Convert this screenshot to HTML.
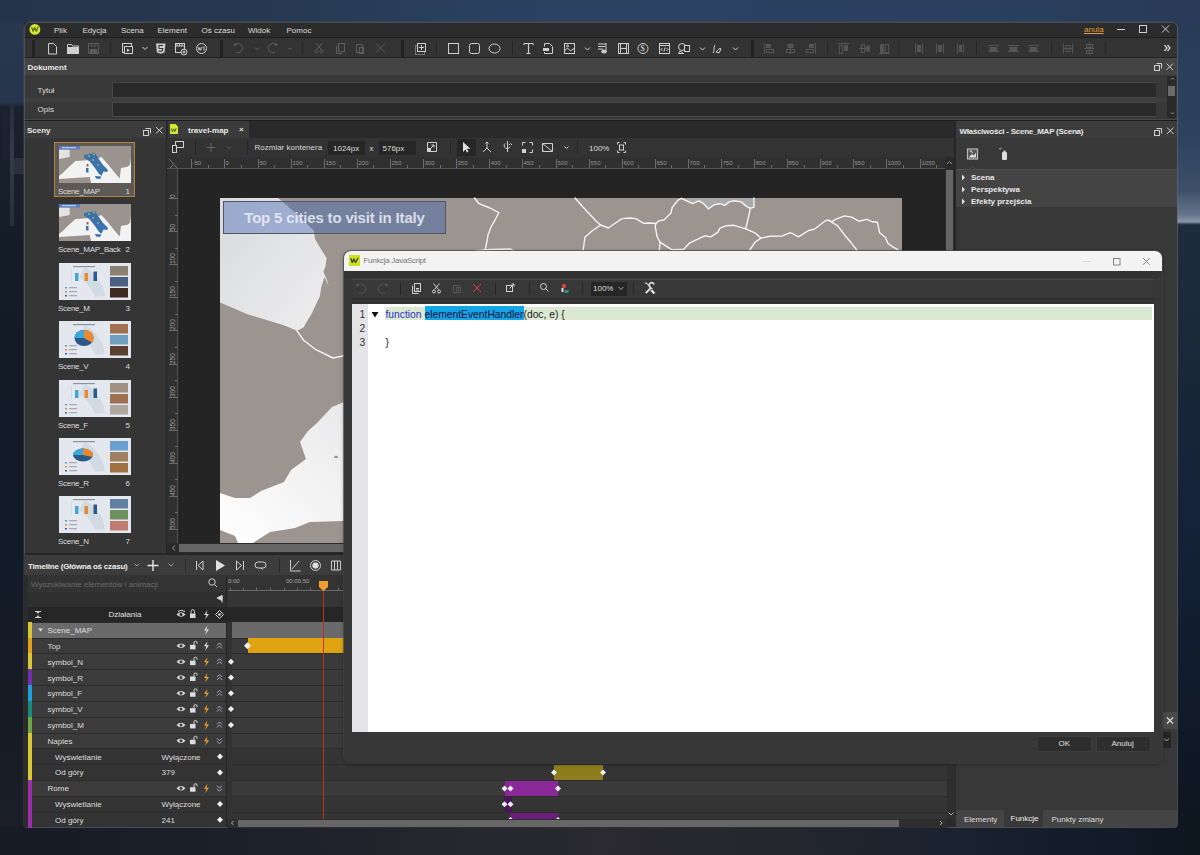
<!DOCTYPE html>
<html><head><meta charset="utf-8">
<style>
*{margin:0;padding:0;box-sizing:border-box}
html,body{width:1200px;height:855px;overflow:hidden}
body{position:relative;font-family:"Liberation Sans",sans-serif;font-size:8px;color:#dcdcdc;
background:linear-gradient(90deg,#1a2636 0%,#22354e 25%,#2b4366 50%,#2a4062 75%,#24364f 100%)}
.a{position:absolute}
.t{position:absolute;white-space:nowrap;line-height:1}
.b{font-weight:bold}
svg{position:absolute;overflow:visible}
</style></head><body>
<!-- desktop -->
<div class="a" style="left:0;top:0;width:1200px;height:22px;background:linear-gradient(90deg,#24344b 0%,#26384f 20%,#2b4263 45%,#2c4264 60%,#2a3f5e 85%,#283a56 100%)"></div>
<div class="a" style="left:0;top:22px;width:24px;height:805px;background:linear-gradient(180deg,#28384f 0%,#26354c 10%,#19212e 10.6%,#161e2a 25%,#121a26 40%,#111a26 55%,#111b28 65%,#151b26 80%,#1b1e26 100%)"></div>
<div class="a" style="left:10px;top:106px;width:3.5px;height:120px;background:linear-gradient(180deg,#262e3a,#343c48 40%,#262e3a)"></div>
<div class="a" style="left:14px;top:158px;width:10px;height:16px;background:#2a303c"></div>
<div class="a" style="left:3px;top:110px;width:6px;height:50px;background:#1c2230"></div>
<div class="a" style="left:1177px;top:22px;width:23px;height:805px;background:linear-gradient(180deg,#283c58 0%,#2f435f 15%,#3e5068 21%,#66768c 24%,#8a96a6 24.8%,#1e2c3c 25.2%,#1a2838 40%,#15223a 60%,#111c2c 80%,#0e1620 100%)"></div>
<div class="a" style="left:0;top:827px;width:1200px;height:28px;background:linear-gradient(90deg,#161b26 0%,#1c2029 20%,#24262e 35%,#2a2a30 50%,#26272d 62%,#1c2330 78%,#131c2a 90%,#0e1620 100%)"></div>
<!-- window base -->
<div class="a" style="left:24px;top:22px;width:1153px;height:805px;background:#2b2b2b;border-radius:6px 6px 3px 3px;box-shadow:0 0 0 1px rgba(80,80,80,.35)"></div>
<!-- menu bar -->
<div class="a" style="left:24px;top:22px;width:1153px;height:16px;background:#2c2c2c;border-radius:6px 6px 0 0;border-bottom:1px solid #1f1f1f"></div>
<svg style="left:0;top:0" width="50" height="40"><circle cx="34.9" cy="29.4" r="5.4" fill="#d4e634"/><path d="M31.6 27.2l1.5 4 1.6-3.6 1.6 3.6 2-4.6" fill="none" stroke="#5a6a10" stroke-width="1.2" stroke-linejoin="round"/></svg>
<div class="t" style="left:54px;top:26.70px">Plik</div>
<div class="t" style="left:82.5px;top:26.70px">Edycja</div>
<div class="t" style="left:121px;top:26.70px">Scena</div>
<div class="t" style="left:157.5px;top:26.70px">Element</div>
<div class="t" style="left:201.5px;top:26.70px">Oś czasu</div>
<div class="t" style="left:248px;top:26.70px">Widok</div>
<div class="t" style="left:286.5px;top:26.70px">Pomoc</div>
<div class="t" style="left:1084px;top:25.70px;color:#e49a3c;text-decoration:underline">anula</div>
<svg style="left:0;top:0" width="1200" height="40">
 <g stroke="#d0d0d0" stroke-width="1" fill="none">
  <path d="M1117 29.5h8"/>
  <rect x="1139.5" y="25.5" width="7" height="7"/>
  <path d="M1162 25.5l7 7M1169 25.5l-7 7"/>
 </g>
</svg>
<!-- main toolbar -->
<div class="a" style="left:24px;top:38px;width:1153px;height:20px;background:#333333;border-bottom:1px solid #232323"></div>

<svg style="left:0;top:0" width="1200" height="60">
 <!-- grips / separators -->
 <g fill="#222">
  <rect x="32" y="40" width="3" height="17"/>
  <rect x="220" y="40" width="3" height="17"/>
  <rect x="401" y="40" width="3" height="17"/>
  <rect x="751" y="40" width="3" height="17"/>
 </g>
 <g stroke="#262626" stroke-width="1">
  <path d="M110.5 41v14M302.5 41v14M436.5 41v14M512.5 41v14M827.5 41v14M898.5 41v14M976.5 41v14M1051.5 41v14M1105.5 41v14"/>
 </g>
 <g fill="none" stroke="#cfcfcf" stroke-width="1">
  <!-- new doc -->
  <path d="M48.5 43.5h5l3 3v7.5h-8z"/>
  <!-- folder -->
  <path d="M67.5 44.5h4l1 1.5h6v7.5h-11z"/>
  <rect x="67.5" y="47.5" width="11" height="6" fill="#cfcfcf"/>
  <!-- scene -->
  <rect x="122.5" y="43.5" width="9" height="9"/>
  <rect x="124.5" y="46.5" width="8" height="7" fill="#333"/>
  <path d="M127 48.5l3 1.7-3 1.7z" fill="#cfcfcf" stroke="none"/>
  <path d="M142.5 47l2.5 2.5 2.5-2.5"/>
  <!-- html5 -->
  <path d="M156 43.5h9.5l-1 9-3.8 1.2-3.8-1.2z" fill="#cfcfcf" stroke="none"/>
  <path d="M158.5 45.5h4.5M158.8 45.5l.4 3h3.5l-.3 2.3-2 .6-2-.6" stroke="#333" stroke-width="1.1"/>
  <!-- film add -->
  <rect x="175.5" y="43.5" width="9" height="9"/>
  <path d="M175.5 46h9M177 43.5v2.5M179.5 43.5v2.5M182 43.5v2.5"/>
  <circle cx="184" cy="52" r="3" fill="#333"/>
  <path d="M182.3 52h3.4M184 50.3v3.4"/>
  <!-- WS circle -->
  <circle cx="201.5" cy="48.5" r="5"/>
  <path d="M198 46.8l.9 3.6.9-2.8.9 2.8.9-3.6M204.8 47.2c-.4-.5-1.8-.6-1.8.3 0 .9 1.9.7 1.9 1.7 0 .9-1.5 1-2 .3" stroke-width=".8"/>
 </g>
 <g fill="none" stroke="#5c5c5c" stroke-width="1">
  <!-- save disabled -->
  <path d="M88.5 43.5h10v10h-10z"/>
  <rect x="90.5" y="49.5" width="6" height="4" fill="#5c5c5c"/>
  <path d="M91 43.5v2.5h5v-2.5"/>
  <!-- undo/redo -->
  <path d="M235.5 44.5a4.5 4.5 0 1 1 0.5 7.5"/><circle cx="235" cy="44.5" r="1" fill="#5c5c5c"/>
  <path d="M255 47.5l2 2 2-2"/>
  <path d="M275.5 44.5a4.5 4.5 0 1 0-0.5 7.5"/><circle cx="276" cy="44.5" r="1" fill="#5c5c5c"/>
  <path d="M288 47.5l2 2 2-2"/>
  <!-- cut -->
  <path d="M316 43l5.5 7M322 43l-5.5 7"/>
  <circle cx="316.5" cy="51.5" r="1.5"/><circle cx="321.5" cy="51.5" r="1.5"/>
  <!-- copy -->
  <path d="M336.5 45.5v8h6"/><rect x="338.5" y="43.5" width="6" height="8"/>
  <!-- paste -->
  <rect x="356.5" y="44.5" width="6" height="8"/><rect x="359.5" y="47.5" width="4" height="6"/>
  <!-- x -->
  <path d="M376 43.5l9 9M385 43.5l-9 9"/>
 </g>
 <g fill="none" stroke="#cfcfcf" stroke-width="1">
  <!-- add element -->
  <rect x="415.5" y="45.5" width="9" height="9" stroke="#777"/>
  <rect x="417.5" y="43.5" width="8" height="8" fill="#333"/>
  <path d="M421.5 45v5M419 47.5h5"/>
  <!-- rect, rounded, ellipse -->
  <rect x="448.5" y="43.5" width="10" height="10"/>
  <rect x="469.5" y="43.5" width="10" height="10" rx="2"/>
  <ellipse cx="494.5" cy="48.5" rx="5.5" ry="4.5"/>
  <!-- T -->
  <path d="M524 43.5h9M528.5 43.5v10M526.5 53.5h4M524 43.5v1.5M533 43.5v1.5" stroke-width="1.2"/>
  <!-- html doc -->
  <path d="M544.5 52v1.5h8v-7l-3-3h-5v3"/>
  <rect x="543" y="48" width="6" height="3" fill="#cfcfcf" stroke="none"/>
  <!-- image -->
  <rect x="564.5" y="43.5" width="10" height="10"/>
  <path d="M564.5 51l3-3 3 3 4-3"/>
  <circle cx="567.5" cy="46" r="1"/>
  <path d="M585 47.5l2.5 2.5 2.5-2.5"/>
  <!-- audio -->
  <path d="M598 44h8M598 46.5h7M598 49h5M606 43v8"/>
  <ellipse cx="604" cy="51.5" rx="2.5" ry="1.5" fill="#cfcfcf"/>
  <!-- film -->
  <rect x="618.5" y="43.5" width="10" height="10"/>
  <path d="M620.5 43.5v10M626.5 43.5v10M620.5 48.5h6"/>
  <!-- S -->
  <circle cx="643" cy="48.5" r="5"/>
  <text x="640.5" y="51.3" font-size="7.5" font-family="Liberation Serif" font-weight="bold" fill="#cfcfcf" stroke="none">S</text>
  <!-- code -->
  <rect x="659.5" y="43.5" width="10" height="10"/>
  <path d="M659.5 45.5h10"/>
  <path d="M662.5 48l-1.5 1.5 1.5 1.5M666.5 48l1.5 1.5-1.5 1.5M665 47.5l-1 4"/>
  <!-- shapes -->
  <circle cx="682" cy="47" r="3.5"/>
  <rect x="684.5" y="45.5" width="5" height="6" fill="#333"/>
  <path d="M680 51l-1.5 2.5h5z"/>
  <path d="M700 47.5l2.5 2.5 2.5-2.5"/>
  <!-- pen -->
  <path d="M713 53c2-1 0-5 2-8M716 52l4-4 1 1-2 4z"/>
  <path d="M733 47.5l2.5 2.5 2.5-2.5"/>
  <!-- chevrons » -->
  <path d="M1164.5 45l2.5 3-2.5 3M1167.5 45l2.5 3-2.5 3" stroke-width="1.3"/>
 </g>
 <g fill="none" stroke="#555" stroke-width="1">
  <!-- align horiz -->
  <path d="M764.5 43v11"/><rect x="766.5" y="44.5" width="4" height="3" fill="#555"/><rect x="766.5" y="49.5" width="7" height="3"/>
  <path d="M790.5 43v11"/><rect x="788" y="44.5" width="5" height="3" fill="#555"/><rect x="786.5" y="49.5" width="8" height="3"/>
  <path d="M815.5 43v11"/><rect x="809.5" y="44.5" width="4" height="3" fill="#555"/><rect x="806.5" y="49.5" width="7" height="3"/>
  <!-- align vert -->
  <path d="M838 43.5h11"/><rect x="839.5" y="45.5" width="3" height="8"/><rect x="844.5" y="45.5" width="3" height="5" fill="#555"/>
  <path d="M859 48.5h11"/><rect x="861.5" y="44.5" width="3" height="8"/><rect x="866.5" y="46" width="3" height="5" fill="#555"/>
  <path d="M879 53.5h11"/><rect x="880.5" y="44.5" width="3" height="8" fill="#555"/><rect x="885.5" y="44.5" width="3" height="8"/>
  <!-- distribute -->
  <path d="M915.5 43.5v10M922.5 43.5v10"/><rect x="917.5" y="45.5" width="3" height="6" fill="#555"/>
  <path d="M936.5 43.5v10M943.5 43.5v10"/><rect x="938.5" y="45.5" width="3" height="6" fill="#555"/>
  <path d="M957.5 43.5v10M963.5 43.5v10"/><rect x="959.5" y="45.5" width="2" height="6" fill="#555"/>
  <path d="M988 45.5h11M988 51.5h11"/><rect x="990" y="47.5" width="7" height="3" fill="#555"/>
  <path d="M1008 45.5h11M1008 51.5h11"/><rect x="1010" y="47.5" width="7" height="3" fill="#555"/>
  <path d="M1028 45.5h11M1028 51.5h11"/><rect x="1030" y="47.5" width="7" height="3" fill="#555"/>
  <path d="M1063.5 43.5v10M1072.5 43.5v10M1063.5 48.5h9"/><rect x="1066" y="45.5" width="4" height="6"/>
  <path d="M1089.5 42.5v12M1084 48.5h11"/><rect x="1086.5" y="44.5" width="6" height="3"/><rect x="1086.5" y="50.5" width="6" height="3"/>
 </g>
</svg>

<!-- Dokument panel -->
<div class="a" style="left:24px;top:58px;width:1153px;height:17px;background:#444444"></div>
<div class="t b" style="left:27.5px;top:64.20px;color:#e8e8e8">Dokument</div>
<div class="a" style="left:24px;top:75px;width:1153px;height:45px;background:#383838"></div>
<div class="t" style="left:37.5px;top:86.70px">Tytuł</div>
<div class="t" style="left:37.5px;top:105.70px">Opis</div>
<div class="a" style="left:112px;top:82px;width:1044px;height:15.5px;background:#2a2a2a;border:1px solid #474747;border-right:none"></div>
<div class="a" style="left:112px;top:102px;width:1044px;height:14.5px;background:#2a2a2a;border:1px solid #474747;border-right:none"></div>
<div class="a" style="left:24px;top:97.5px;width:1143px;height:4.5px;background:#3e3e3e"></div>
<div class="a" style="left:24px;top:118.5px;width:1153px;height:1px;background:#474747"></div>
<div class="a" style="left:1167px;top:76px;width:9px;height:42px;background:#2a2a2a"></div>
<div class="a" style="left:1168px;top:86px;width:7px;height:10px;background:#6a6a6a"></div>
<svg style="left:0;top:0" width="1200" height="120">
 <g fill="none" stroke="#cfcfcf" stroke-width="1">
  <path d="M1171 79.5l1.5-1.5 1.5 1.5M1171 112.5l1.5 1.5 1.5-1.5" stroke="#999"/>
  <rect x="1154.5" y="65.5" width="5" height="5"/><path d="M1156.5 63.5h5v5"/>
  <path d="M1166.5 63.5l6.5 6.5M1173 63.5l-6.5 6.5"/>
 </g>
</svg>

<!-- Sceny panel -->
<div class="a" style="left:24px;top:120px;width:1153px;height:1px;background:#1e1e1e"></div>
<div class="a" style="left:24px;top:121px;width:142px;height:16.5px;background:#3c3c3c"></div>
<div class="t b" style="left:27px;top:127.20px;color:#e8e8e8">Sceny</div>
<svg style="left:0;top:0" width="200" height="140">
 <g fill="none" stroke="#cfcfcf" stroke-width="1">
  <rect x="143.5" y="130.5" width="5" height="5"/><path d="M145.5 128.5h5v5"/>
  <path d="M156 127l6.5 6.5M162.5 127l-6.5 6.5"/>
 </g>
</svg>
<div class="a" style="left:24px;top:137.5px;width:142px;height:417px;background:#353535"></div>
<div class="a" style="left:166px;top:121px;width:1px;height:434px;background:#262626"></div>
<!-- scene 1 selected -->
<div class="a" style="left:54px;top:142px;width:81px;height:55px;background:#5d5955;border:1px solid #b3843f"></div>

<svg style="left:59px;top:145.5px" width="72" height="37" viewBox="0 0 72 37">
 <rect width="72" height="37" fill="#9a938e"/>
 <path d="M0 29.8 L3.5 27.2 L8.7 22 L16.5 14.9 L25 14.5 L30 14 L39.3 12.3 L42.5 11 L51 20.7 L55.5 26.5 L60.7 32.4 L62 22 L68.5 20.7 L71 18.8 L72 12 V37 H32 L30.8 31 L0 33 Z" fill="#f2f2f2"/>
 <path d="M0 3.5 L10.7 3.5 L10.7 11 L0 13 Z" fill="#e4e4e4"/>
 <path d="M25 9 L36 7 L39.3 12.3 L43.8 18.8 L49 24 L48 26 L44.5 25.5 L42.5 29.8 L40 28 L36 22 L30.8 15.5 L25 11.5 Z" fill="#3a72ac"/>
 <path d="M36 30 L42.5 30.5 L41 33 L37 32.5 Z" fill="#3a72ac"/>
 <path d="M27 22 H29.5 V26.5 H27 Z" fill="#3a72ac"/>
 <path d="M27.6 18 H29.5 V20.5 H27.6 Z" fill="#a05a50"/>
 <circle cx="30" cy="10" r=".8" fill="#e8d040"/><circle cx="35" cy="8.5" r=".8" fill="#e8d040"/><circle cx="34" cy="14" r=".8" fill="#e8d040"/><circle cx="39" cy="19" r=".8" fill="#e8d040"/>
 <rect x="0" y="0" width="21" height="3.5" fill="#5a7cc0"/><rect x="3" y="1.2" width="14" height="1" fill="#c8d4f0"/>
</svg>
<div class="t" style="left:58px;top:187.5px;letter-spacing:-.3px">Scene_MAP</div>
<div class="t" style="left:125.5px;top:187.5px">1</div>
<svg style="left:59px;top:204px" width="72" height="37" viewBox="0 0 72 37">
 <rect width="72" height="37" fill="#9a938e"/>
 <path d="M0 29.8 L3.5 27.2 L8.7 22 L16.5 14.9 L25 14.5 L30 14 L39.3 12.3 L42.5 11 L51 20.7 L55.5 26.5 L60.7 32.4 L62 22 L68.5 20.7 L71 18.8 L72 12 V37 H32 L30.8 31 L0 33 Z" fill="#f2f2f2"/>
 <path d="M0 3.5 L10.7 3.5 L10.7 11 L0 13 Z" fill="#e4e4e4"/>
 <path d="M25 9 L36 7 L39.3 12.3 L43.8 18.8 L49 24 L48 26 L44.5 25.5 L42.5 29.8 L40 28 L36 22 L30.8 15.5 L25 11.5 Z" fill="#3a72ac"/>
 <path d="M36 30 L42.5 30.5 L41 33 L37 32.5 Z" fill="#3a72ac"/>
 <path d="M27 22 H29.5 V26.5 H27 Z" fill="#3a72ac"/>
 <path d="M27.6 18 H29.5 V20.5 H27.6 Z" fill="#a05a50"/>
 <circle cx="30" cy="10" r=".8" fill="#e8d040"/><circle cx="35" cy="8.5" r=".8" fill="#e8d040"/><circle cx="34" cy="14" r=".8" fill="#e8d040"/><circle cx="39" cy="19" r=".8" fill="#e8d040"/>
 <rect x="0" y="0" width="21" height="3.5" fill="#5a7cc0"/><rect x="3" y="1.2" width="14" height="1" fill="#c8d4f0"/>
</svg>
<div class="t" style="left:58px;top:246px;letter-spacing:-.3px">Scene_MAP_Back</div>
<div class="t" style="left:125.5px;top:246px">2</div>
<svg style="left:59px;top:262.5px" width="72" height="37" viewBox="0 0 72 37">
 <rect width="72" height="37" fill="#e4e8ee"/>
 <path d="M26 4 C34 8 40 16 44 24 L46 33 L36 34 C33 26 28 20 20 14 Z" fill="#d2dae4"/>
 <rect x="14" y="3" width="22" height="1.2" fill="#8a94a0"/>
 <rect x="16" y="10" width="3.5" height="8" fill="#40a8d8"/><rect x="25.5" y="10" width="3.5" height="8" fill="#e88a30"/><rect x="34.5" y="8.5" width="3.5" height="9.5" fill="#2a5a8a"/><rect x="12" y="6" width=".5" height="13" fill="#c8ccd4"/>
 <rect x="6" y="24" width="2" height="1.5" fill="#40a8d8"/><rect x="10" y="24.2" width="8" height="1" fill="#99a"/>
 <rect x="6" y="28" width="2" height="1.5" fill="#e88a30"/><rect x="10" y="28.2" width="8" height="1" fill="#99a"/>
 <rect x="6" y="32" width="2" height="1.5" fill="#2a6aa0"/><rect x="10" y="32.2" width="8" height="1" fill="#99a"/>
 <rect x="51" y="3" width="18" height="9.5" fill="#8a8070"/>
 <rect x="51" y="14" width="18" height="9.5" fill="#4a6080"/>
 <rect x="51" y="25" width="18" height="9.5" fill="#3a2a20"/>
</svg>
<div class="t" style="left:58px;top:304.5px;letter-spacing:-.3px">Scene_M</div>
<div class="t" style="left:125.5px;top:304.5px">3</div>
<svg style="left:59px;top:321px" width="72" height="37" viewBox="0 0 72 37">
 <rect width="72" height="37" fill="#e4e8ee"/>
 <path d="M26 4 C34 8 40 16 44 24 L46 33 L36 34 C33 26 28 20 20 14 Z" fill="#d2dae4"/>
 <rect x="14" y="3" width="22" height="1.2" fill="#8a94a0"/>
 <ellipse cx="25" cy="17" rx="9.5" ry="8" fill="#2a5a8a"/><path d="M25 17 L25 9 A9.5 8 0 0 1 33 21.5 Z" fill="#e88a30"/><path d="M25 17 L15.5 17 A9.5 8 0 0 1 25 9 Z" fill="#3aa8d8"/>
 <rect x="6" y="24" width="2" height="1.5" fill="#40a8d8"/><rect x="10" y="24.2" width="8" height="1" fill="#99a"/>
 <rect x="6" y="28" width="2" height="1.5" fill="#e88a30"/><rect x="10" y="28.2" width="8" height="1" fill="#99a"/>
 <rect x="6" y="32" width="2" height="1.5" fill="#2a6aa0"/><rect x="10" y="32.2" width="8" height="1" fill="#99a"/>
 <rect x="51" y="3" width="18" height="9.5" fill="#a07050"/>
 <rect x="51" y="14" width="18" height="9.5" fill="#70a0c0"/>
 <rect x="51" y="25" width="18" height="9.5" fill="#5a4030"/>
</svg>
<div class="t" style="left:58px;top:363px;letter-spacing:-.3px">Scene_V</div>
<div class="t" style="left:125.5px;top:363px">4</div>
<svg style="left:59px;top:379.5px" width="72" height="37" viewBox="0 0 72 37">
 <rect width="72" height="37" fill="#e4e8ee"/>
 <path d="M26 4 C34 8 40 16 44 24 L46 33 L36 34 C33 26 28 20 20 14 Z" fill="#d2dae4"/>
 <rect x="14" y="3" width="22" height="1.2" fill="#8a94a0"/>
 <rect x="16" y="10" width="3.5" height="8" fill="#40a8d8"/><rect x="25.5" y="10" width="3.5" height="8" fill="#e88a30"/><rect x="34.5" y="8.5" width="3.5" height="9.5" fill="#2a5a8a"/><rect x="12" y="6" width=".5" height="13" fill="#c8ccd4"/>
 <rect x="6" y="24" width="2" height="1.5" fill="#40a8d8"/><rect x="10" y="24.2" width="8" height="1" fill="#99a"/>
 <rect x="6" y="28" width="2" height="1.5" fill="#e88a30"/><rect x="10" y="28.2" width="8" height="1" fill="#99a"/>
 <rect x="6" y="32" width="2" height="1.5" fill="#2a6aa0"/><rect x="10" y="32.2" width="8" height="1" fill="#99a"/>
 <rect x="51" y="3" width="18" height="9.5" fill="#a09080"/>
 <rect x="51" y="14" width="18" height="9.5" fill="#a07050"/>
 <rect x="51" y="25" width="18" height="9.5" fill="#b0a8a0"/>
</svg>
<div class="t" style="left:58px;top:421.5px;letter-spacing:-.3px">Scene_F</div>
<div class="t" style="left:125.5px;top:421.5px">5</div>
<svg style="left:59px;top:438px" width="72" height="37" viewBox="0 0 72 37">
 <rect width="72" height="37" fill="#e4e8ee"/>
 <path d="M26 4 C34 8 40 16 44 24 L46 33 L36 34 C33 26 28 20 20 14 Z" fill="#d2dae4"/>
 <rect x="14" y="3" width="22" height="1.2" fill="#8a94a0"/>
 <ellipse cx="24" cy="17" rx="10" ry="6.5" fill="#2a5a8a"/><path d="M24 17 L24 10.5 A10 6.5 0 0 1 33.5 19 Z" fill="#e88a30"/><path d="M24 17 L14 17 A10 6.5 0 0 1 24 10.5 Z" fill="#3aa8d8"/>
 <rect x="6" y="24" width="2" height="1.5" fill="#40a8d8"/><rect x="10" y="24.2" width="8" height="1" fill="#99a"/>
 <rect x="6" y="28" width="2" height="1.5" fill="#e88a30"/><rect x="10" y="28.2" width="8" height="1" fill="#99a"/>
 <rect x="6" y="32" width="2" height="1.5" fill="#2a6aa0"/><rect x="10" y="32.2" width="8" height="1" fill="#99a"/>
 <rect x="51" y="3" width="18" height="9.5" fill="#6aa0d0"/>
 <rect x="51" y="14" width="18" height="9.5" fill="#a08060"/>
 <rect x="51" y="25" width="18" height="9.5" fill="#a07040"/>
</svg>
<div class="t" style="left:58px;top:480px;letter-spacing:-.3px">Scene_R</div>
<div class="t" style="left:125.5px;top:480px">6</div>
<svg style="left:59px;top:496px" width="72" height="37" viewBox="0 0 72 37">
 <rect width="72" height="37" fill="#e4e8ee"/>
 <path d="M26 4 C34 8 40 16 44 24 L46 33 L36 34 C33 26 28 20 20 14 Z" fill="#d2dae4"/>
 <rect x="14" y="3" width="22" height="1.2" fill="#8a94a0"/>
 <rect x="16" y="10" width="3.5" height="8" fill="#40a8d8"/><rect x="25.5" y="10" width="3.5" height="8" fill="#e88a30"/><rect x="34.5" y="8.5" width="3.5" height="9.5" fill="#2a5a8a"/><rect x="12" y="6" width=".5" height="13" fill="#c8ccd4"/>
 <rect x="6" y="24" width="2" height="1.5" fill="#40a8d8"/><rect x="10" y="24.2" width="8" height="1" fill="#99a"/>
 <rect x="6" y="28" width="2" height="1.5" fill="#e88a30"/><rect x="10" y="28.2" width="8" height="1" fill="#99a"/>
 <rect x="6" y="32" width="2" height="1.5" fill="#2a6aa0"/><rect x="10" y="32.2" width="8" height="1" fill="#99a"/>
 <rect x="51" y="3" width="18" height="9.5" fill="#6080a0"/>
 <rect x="51" y="14" width="18" height="9.5" fill="#709060"/>
 <rect x="51" y="25" width="18" height="9.5" fill="#c07a70"/>
</svg>
<div class="t" style="left:58px;top:538px;letter-spacing:-.3px">Scene_N</div>
<div class="t" style="left:125.5px;top:538px">7</div>
<!-- editor tabs -->
<div class="a" style="left:167px;top:121px;width:788px;height:16.5px;background:#2a2a2a"></div>
<div class="a" style="left:167.5px;top:121px;width:81.5px;height:16.5px;background:#3b3b3b"></div>
<svg style="left:0;top:0" width="200" height="140"><path d="M170 124h5.5l2.5 2.5v7.5h-8z" fill="#d4e634"/><path d="M171.3 128.5l1.1 3 1.2-2.6 1.2 2.6 1.4-3.4" fill="none" stroke="#4a5a10" stroke-width="1"/></svg>
<div class="t b" style="left:188px;top:126.70px;color:#e8e8e8">travel-map</div>
<div class="t b" style="left:239px;top:126.20px;color:#ddd;font-size:8px">×</div>
<!-- tool row -->
<div class="a" style="left:167px;top:137.5px;width:788px;height:19.5px;background:#333333"></div>
<div class="t" style="left:254.5px;top:144.20px;color:#d8d8d8">Rozmiar kontenera</div>
<div class="a" style="left:328px;top:141px;width:37px;height:14px;background:#262626"></div>
<div class="t" style="left:333px;top:144.70px;color:#ddd">1024px</div>
<div class="t" style="left:369.5px;top:144.70px;color:#ddd">x</div>
<div class="a" style="left:378.5px;top:141px;width:37px;height:14px;background:#262626"></div>
<div class="t" style="left:382.5px;top:144.70px;color:#ddd">576px</div>
<div class="a" style="left:457px;top:139px;width:19px;height:17px;background:#262626"></div>
<div class="t" style="left:589px;top:144.70px;color:#ddd">100%</div>

<svg style="left:0;top:0" width="1000" height="170">
 <g stroke="#262626"><path d="M195.5 140v15M247.5 140v15M450.5 140v15M577.5 140v15"/></g>
 <g fill="none" stroke="#cfcfcf" stroke-width="1">
  <rect x="175.5" y="141.5" width="8" height="6"/><rect x="172.5" y="145.5" width="4" height="7" fill="#333"/>
  <path d="M427.5 142.5h9v9h-9z"/><path d="M430 149l4-4M431.5 145h2.5v2.5"/><rect x="427.5" y="148.5" width="3" height="3" fill="#cfcfcf"/>
  <path d="M463 142v10l2.5-2.5 1.5 3 1.5-.8-1.5-3h3.5z" fill="#e0e0e0" stroke="none"/>
  <path d="M487 142v6M487 148l-4 4M487 148l4 4M485.5 143.5l1.5-1.5 1.5 1.5" />
  <path d="M505 143.5a3 3 0 1 0 5 3M507.5 141v11M509 145l1.5-1.5 1.5 1.5"/>
  <path d="M522.5 145.5v-3h3M529.5 142.5h3v3M532.5 149.5v3h-3M522.5 149.5"/><rect x="522.5" y="149.5" width="3" height="3" fill="#cfcfcf"/>
  <path d="M542.5 143.5h10v8h-10z M542.5 143.5l10 8M545 152l-1.5-1.5"/>
  <path d="M564.5 146.5l2 2 2-2"/>
  <path d="M617.5 144.5v-2h2M623.5 142.5h2v2M625.5 150.5v2h-2M619.5 152.5h-2v-2"/><rect x="619.5" y="145" width="4" height="5"/>
 </g>
 <g fill="none" stroke="#666" stroke-width="1">
  <path d="M211 143v9M206.5 147.5h9"/>
  <path d="M227 146.5l2 2 2-2"/>
 </g>
</svg>
<div class="a" style="left:167px;top:157px;width:778px;height:12px;background:#303030;border-bottom:1px solid #555"></div>
<div class="a" style="left:945px;top:157px;width:10px;height:12px;background:#2a2a2a"></div>
<div class="a" style="left:167px;top:169px;width:11px;height:374px;background:#303030;border-right:1px solid #555"></div>
<div class="a" style="left:178px;top:169px;width:767px;height:374px;background:#242424"></div>
<div class="a" style="left:945px;top:169px;width:9px;height:374px;background:#2a2a2a"></div>
<div class="a" style="left:946px;top:170px;width:7px;height:372px;background:#666666"></div>
<div class="a" style="left:167px;top:543px;width:788px;height:10px;background:#2a2a2a"></div>
<div class="a" style="left:179px;top:544px;width:776px;height:8px;background:#666666"></div>
<div class="a" style="left:954px;top:121px;width:1.5px;height:434px;background:#262626"></div>
<div class="a" style="left:167px;top:553px;width:788px;height:2px;background:#262626"></div>
<div class="a" style="left:24px;top:553px;width:142px;height:2px;background:#262626"></div>

<svg style="left:0;top:0" width="960" height="560"><g stroke="#6a6a6a" stroke-width="1">
<path d="M191.5 159v9"/>
<path d="M208.5 165v3"/>
<path d="M224.5 159v9"/>
<path d="M241.5 165v3"/>
<path d="M258.5 159v9"/>
<path d="M274.5 165v3"/>
<path d="M291.5 159v9"/>
<path d="M307.5 165v3"/>
<path d="M324.5 159v9"/>
<path d="M340.5 165v3"/>
<path d="M357.5 159v9"/>
<path d="M373.5 165v3"/>
<path d="M390.5 159v9"/>
<path d="M407.5 165v3"/>
<path d="M423.5 159v9"/>
<path d="M440.5 165v3"/>
<path d="M456.5 159v9"/>
<path d="M473.5 165v3"/>
<path d="M489.5 159v9"/>
<path d="M506.5 165v3"/>
<path d="M522.5 159v9"/>
<path d="M539.5 165v3"/>
<path d="M556.5 159v9"/>
<path d="M572.5 165v3"/>
<path d="M589.5 159v9"/>
<path d="M605.5 165v3"/>
<path d="M622.5 159v9"/>
<path d="M638.5 165v3"/>
<path d="M655.5 159v9"/>
<path d="M671.5 165v3"/>
<path d="M688.5 159v9"/>
<path d="M704.5 165v3"/>
<path d="M721.5 159v9"/>
<path d="M738.5 165v3"/>
<path d="M754.5 159v9"/>
<path d="M771.5 165v3"/>
<path d="M787.5 159v9"/>
<path d="M804.5 165v3"/>
<path d="M820.5 159v9"/>
<path d="M837.5 165v3"/>
<path d="M853.5 159v9"/>
<path d="M870.5 165v3"/>
<path d="M886.5 159v9"/>
<path d="M903.5 165v3"/>
<path d="M920.5 159v9"/>
<path d="M936.5 165v3"/>
<path d="M169 198.5h9"/>
<path d="M175 215.5h3"/>
<path d="M169 231.5h9"/>
<path d="M175 248.5h3"/>
<path d="M169 264.5h9"/>
<path d="M175 281.5h3"/>
<path d="M169 297.5h9"/>
<path d="M175 314.5h3"/>
<path d="M169 330.5h9"/>
<path d="M175 347.5h3"/>
<path d="M169 364.5h9"/>
<path d="M175 380.5h3"/>
<path d="M169 397.5h9"/>
<path d="M175 413.5h3"/>
<path d="M169 430.5h9"/>
<path d="M175 446.5h3"/>
<path d="M169 463.5h9"/>
<path d="M175 479.5h3"/>
<path d="M169 496.5h9"/>
<path d="M175 512.5h3"/>
<path d="M169 529.5h9"/>
<path d="M169 159l8 9M170 168l3-3" stroke="#777"/>
</g><g fill="none" stroke="#999"><path d="M947 164l2.5-2.5 2.5 2.5M175 545.5l-2.5 2.5 2.5 2.5"/></g></svg>
<div class="t" style="left:192.5px;top:160px;font-size:6px;color:#949494">-50</div>
<div class="t" style="left:225.5px;top:160px;font-size:6px;color:#949494">0</div>
<div class="t" style="left:259.5px;top:160px;font-size:6px;color:#949494">50</div>
<div class="t" style="left:292.5px;top:160px;font-size:6px;color:#949494">100</div>
<div class="t" style="left:325.5px;top:160px;font-size:6px;color:#949494">150</div>
<div class="t" style="left:358.5px;top:160px;font-size:6px;color:#949494">200</div>
<div class="t" style="left:391.5px;top:160px;font-size:6px;color:#949494">250</div>
<div class="t" style="left:424.5px;top:160px;font-size:6px;color:#949494">300</div>
<div class="t" style="left:457.5px;top:160px;font-size:6px;color:#949494">350</div>
<div class="t" style="left:490.5px;top:160px;font-size:6px;color:#949494">400</div>
<div class="t" style="left:523.5px;top:160px;font-size:6px;color:#949494">450</div>
<div class="t" style="left:557.5px;top:160px;font-size:6px;color:#949494">500</div>
<div class="t" style="left:590.5px;top:160px;font-size:6px;color:#949494">550</div>
<div class="t" style="left:623.5px;top:160px;font-size:6px;color:#949494">600</div>
<div class="t" style="left:656.5px;top:160px;font-size:6px;color:#949494">650</div>
<div class="t" style="left:689.5px;top:160px;font-size:6px;color:#949494">700</div>
<div class="t" style="left:722.5px;top:160px;font-size:6px;color:#949494">750</div>
<div class="t" style="left:755.5px;top:160px;font-size:6px;color:#949494">800</div>
<div class="t" style="left:788.5px;top:160px;font-size:6px;color:#949494">850</div>
<div class="t" style="left:821.5px;top:160px;font-size:6px;color:#949494">900</div>
<div class="t" style="left:854.5px;top:160px;font-size:6px;color:#949494">950</div>
<div class="t" style="left:887.5px;top:160px;font-size:6px;color:#949494">1000</div>
<div class="t" style="left:921.5px;top:160px;font-size:6px;color:#949494">1050</div>
<div class="t" style="left:170px;top:197.5px;font-size:6.5px;color:#a0a0a0;transform:rotate(-90deg);transform-origin:0 0">0</div>
<div class="t" style="left:170px;top:230.5px;font-size:6.5px;color:#a0a0a0;transform:rotate(-90deg);transform-origin:0 0">50</div>
<div class="t" style="left:170px;top:263.5px;font-size:6.5px;color:#a0a0a0;transform:rotate(-90deg);transform-origin:0 0">100</div>
<div class="t" style="left:170px;top:296.5px;font-size:6.5px;color:#a0a0a0;transform:rotate(-90deg);transform-origin:0 0">150</div>
<div class="t" style="left:170px;top:329.5px;font-size:6.5px;color:#a0a0a0;transform:rotate(-90deg);transform-origin:0 0">200</div>
<div class="t" style="left:170px;top:363.5px;font-size:6.5px;color:#a0a0a0;transform:rotate(-90deg);transform-origin:0 0">250</div>
<div class="t" style="left:170px;top:396.5px;font-size:6.5px;color:#a0a0a0;transform:rotate(-90deg);transform-origin:0 0">300</div>
<div class="t" style="left:170px;top:429.5px;font-size:6.5px;color:#a0a0a0;transform:rotate(-90deg);transform-origin:0 0">350</div>
<div class="t" style="left:170px;top:462.5px;font-size:6.5px;color:#a0a0a0;transform:rotate(-90deg);transform-origin:0 0">400</div>
<div class="t" style="left:170px;top:495.5px;font-size:6.5px;color:#a0a0a0;transform:rotate(-90deg);transform-origin:0 0">450</div>
<div class="t" style="left:170px;top:528.5px;font-size:6.5px;color:#a0a0a0;transform:rotate(-90deg);transform-origin:0 0">500</div>
<!-- stage / map -->
<svg style="left:220px;top:198px" width="682" height="345" viewBox="220 198 682 345">
 <defs>
  <linearGradient id="sea1" x1="0" y1="0" x2="1" y2="1"><stop offset="0" stop-color="#d9dadc"/><stop offset="1" stop-color="#eeeeef"/></linearGradient>
  <linearGradient id="sea2" x1="0" y1="1" x2="1" y2="0"><stop offset="0" stop-color="#ffffff"/><stop offset="1" stop-color="#e6e6e8"/></linearGradient>
 </defs>
 <rect x="220" y="198" width="682" height="345" fill="#9b948f"/>
 <path d="M681.5 198 L685 200.2 L692.6 203.7 L699 200.8 L703.7 203.7 L708.3 208.9 L714.2 204.8 L720 203.7 L724.7 205.4 L729.3 201.9 L734 200.8 L741 201.9 L746.9 206.6 L750.4 208.3 L753.9 207.2 L753.9 198 Z" fill="#a7a9ab"/>
 <path d="M220 198 L278 198 L284.5 203.4 L299 216 L314 230.8 L315 239 L320 247.6 L326.6 258 L325.5 266.6 L323.4 271.8 L327 280 L328.7 286 L324.5 277 L321 288 L320 296 L318 300 L312 313 L303.4 327.6 L297 330.8 L284.5 325.5 L263.4 319 L246.6 314 L231.8 307.6 L220 302.4 Z" fill="url(#sea1)"/>
 <path d="M220 493 L235 498 L250 498 L261 491 L284 482 L291 470 L306 459 L300 442 L308 431 L317 423 L332 407 L344 402 L380 398 L380 543 L358 522 L343 521 L310 522 L295 528 L283 530 L270 532 L253 543 L238 543 L235 536 L220 530 Z" fill="url(#sea2)"/>
 <ellipse cx="336" cy="457" rx="2" ry="1.2" fill="#9b948f"/>
 <g fill="none" stroke="#f6f4f2" stroke-width="1.4" stroke-linejoin="round" stroke-linecap="round">
  <path d="M297 330.8 L303.4 340 L316 349.7 L333 358 L345 355.5"/>
  <path d="M474.5 198 L479 203.7 L490 208 L498.8 212.7 L495 220 L491 227 L488 235 L487 241 L485 251"/>
  <path d="M475 251 L490 249.5 L510.5 249 L514.4 251"/>
  <path d="M575 198 L582 206 L589 213.5 L596 221 L600.6 225 L608.4 228 L614 224 L622 218.6 L630 218 L635.8 218.6 L643.7 223.3 L650 223 L655.8 223.5"/>
  <path d="M600.6 225 L592 231 L585 237 L583 251"/>
  <path d="M681.5 198.4 L678 200.2 L672.2 207.2 L671 213 L664 220 L659.3 220.6 L655.8 223.5 L655.3 227 L657 236.3 L660 242.2 L659.3 251"/>
  <path d="M681.5 198.4 L685 200.2 L692.6 203.7 L699 200.8 L703.7 203.7 L708.3 208.9 L714.2 204.8 L720 203.7 L724.7 205.4 L729.3 201.9 L734 200.8 L741 201.9 L746.9 206.6 L750.4 208.3 L753.9 207.2 L753.9 198"/>
  <path d="M750.4 208.3 L748 219 L745.7 228.8"/>
  <path d="M660 242.2 L672.2 249.8 L683.8 249.2 L689.7 242.8 L704.8 235.8 L710.7 236.9 L717.7 232.3 L720 228.2 L725.8 225.8 L734 225.3 L745.7 228.8 L755 232.8 L760.9 238.1"/>
  <path d="M760.9 238.1 L755 242.2 L749.2 251"/>
  <path d="M760.9 238.1 L770 236.3 L781.7 236.1 L789.8 232.8 L792.2 233.4 L798.6 236.9 L808.5 230.5 L814.3 229.3 L824.8 221.2 L828.3 220 L831.8 221.8 L835.3 219.4 L840 217.7 L844.7 215.9 L851.7 217.1 L858.7 221.2 L866.9 219.4 L872.7 221.8 L877.4 222.3 L879.7 232.8 L885.5 237.5 L887.9 243.3 L892.5 246.8 L897.2 249.2 L899 251"/>
  <path d="M828.3 220 L837.7 225.8 L844.7 235.2 L851.7 243.3 L857.5 251"/>
  
 </g>
 <!-- title banner -->
 <rect x="223.5" y="201.5" width="222" height="32" fill="rgba(64,100,180,.42)" stroke="#505666" stroke-width="1"/>
 <text x="334.5" y="223" text-anchor="middle" font-family="Liberation Sans" font-weight="bold" font-size="15" letter-spacing="-0.17" fill="rgba(236,240,248,.85)">Top 5 cities to visit in Italy</text>
</svg>

<!-- properties panel -->
<div class="a" style="left:956px;top:121px;width:221px;height:17px;background:#3c3c3c"></div>
<div class="t b" style="left:959.5px;top:127.5px;color:#e8e8e8;letter-spacing:-.25px">Właściwości - Scene_MAP (Scena)</div>
<div class="a" style="left:956px;top:138px;width:221px;height:689px;background:#383838"></div>
<div class="a" style="left:956px;top:169px;width:221px;height:1px;background:#505050"></div>
<div class="a" style="left:956px;top:170px;width:221px;height:36.5px;background:#444444"></div>
<svg style="left:0;top:0" width="1200" height="210">
 <g fill="none" stroke="#cfcfcf" stroke-width="1">
  <rect x="1154.5" y="130.5" width="5" height="5"/><path d="M1156.5 128.5h5v5"/>
  <path d="M1167 127.5l6.5 6.5M1173.5 127.5l-6.5 6.5"/>
  <rect x="967.5" y="149" width="10" height="10" fill="#555" stroke="#bbb" stroke-width="1.2"/>
  <path d="M969 157l3-3 2 1.5 2-3v5h-7z" fill="#ddd" stroke="none"/>
  <path d="M969.5 151h2l1 2" stroke="#ddd"/>
  <rect x="1002" y="152" width="5" height="8" fill="#ddd" stroke="none" rx="1"/>
  <path d="M1003.5 150.5h2v1.5h-2z" fill="#ddd" stroke="none"/>
  <path d="M999 148.5l1.5 1M1001 147.5v1.5" stroke="#aaa"/>
 </g>
 <path d="M969.5 169.5l3-3 3 3" fill="#383838" stroke="#505050"/>
 <g fill="#e0e0e0">
  <path d="M962 174.5l3 3-3 3z"/><path d="M962 186.5l3 3-3 3z"/><path d="M962 198.5l3 3-3 3z"/>
 </g>
</svg>
<div class="t b" style="left:971px;top:173.5px;color:#e8e8e8">Scena</div>
<div class="t b" style="left:971px;top:185.5px;color:#e8e8e8">Perspektywa</div>
<div class="t b" style="left:971px;top:197.5px;color:#e8e8e8">Efekty przejścia</div>
<!-- right side controls below dialog -->
<div class="a" style="left:1163px;top:712px;width:14px;height:17px;background:#4a4a4a"></div>
<div class="a" style="left:1163px;top:732px;width:8px;height:16px;background:#262626"></div>
<svg style="left:0;top:0" width="1200" height="760">
 <g fill="none" stroke="#e0e0e0" stroke-width="1.1"><path d="M1167 717.5l6 6M1173 717.5l-6 6"/></g>
 <g fill="none" stroke="#aaa" stroke-width="1"><path d="M1164 738.5l2.5 2.5 2.5-2.5"/></g>
</svg>
<!-- bottom tabs -->
<div class="a" style="left:956px;top:810px;width:221px;height:17px;background:#444444;border-radius:0 0 4px 0"></div>
<div class="a" style="left:1004px;top:810px;width:39px;height:17px;background:#383838"></div>
<div class="t" style="left:964px;top:816px;color:#dcdcdc">Elementy</div>
<div class="t" style="left:1010.5px;top:815px;color:#f0f0f0">Funkcje</div>
<div class="t" style="left:1051.5px;top:816px;color:#dcdcdc">Punkty zmiany</div>

<!-- win-outline -->
<div class="a" style="left:23.5px;top:21.5px;width:1154px;height:806px;border:1px solid rgba(120,126,134,.38);border-radius:6px 6px 4px 4px"></div>

<!-- timeline -->
<div class="a" style="left:24px;top:555px;width:931px;height:20px;background:#3c3c3c"></div>
<div class="t b" style="left:28px;top:562.5px;color:#ececec;letter-spacing:-.2px">Timeline (Główna oś czasu)</div>
<div class="a" style="left:24px;top:575px;width:4px;height:252px;background:#2b2b2b"></div>
<div class="a" style="left:28px;top:575px;width:197.5px;height:16.5px;background:#333333"></div>
<div class="t" style="left:31px;top:581px;color:#6a6a6a">Wyszukiwanie elementów i animacji</div>
<div class="a" style="left:28px;top:591.5px;width:197.5px;height:15px;background:#2f2f2f"></div>
<div class="a" style="left:28px;top:606.5px;width:197.5px;height:15.3px;background:#262626"></div>
<div class="t" style="left:108.5px;top:610.5px;color:#e0e0e0">Działania</div>
<div class="a" style="left:225.5px;top:575px;width:1px;height:252px;background:#242424"></div>
<div class="a" style="left:226.5px;top:575px;width:720.5px;height:16.5px;background:#333333"></div>
<div class="a" style="left:226.5px;top:591.5px;width:720.5px;height:15px;background:#353535"></div>
<div class="a" style="left:226.5px;top:606.5px;width:720.5px;height:15.3px;background:#262626"></div>
<div class="t" style="left:228px;top:578px;font-size:6px;color:#aaa">0:00</div>
<div class="t" style="left:286px;top:578px;font-size:6px;color:#aaa">00:00.50</div>

<svg style="left:0;top:0" width="960" height="830"><g stroke="#6a6a6a">
<path d="M228 590.5h719"/>
<path d="M230.5 587.5v2.5"/>
<path d="M243.5 587.5v2.5"/>
<path d="M256.5 587.5v2.5"/>
<path d="M270.5 587.5v2.5"/>
<path d="M284.5 587.5v2.5"/>
<path d="M297.5 587.5v2.5"/>
<path d="M310.5 587.5v2.5"/>
<path d="M324.5 587.5v2.5"/>
<path d="M338.5 587.5v2.5"/>
<path d="M351.5 587.5v2.5"/>
<path d="M364.5 587.5v2.5"/>
<path d="M378.5 587.5v2.5"/>
<path d="M392.5 587.5v2.5"/>
<path d="M405.5 587.5v2.5"/>
<path d="M418.5 587.5v2.5"/>
<path d="M432.5 587.5v2.5"/>
<path d="M446.5 587.5v2.5"/>
<path d="M459.5 587.5v2.5"/>
<path d="M472.5 587.5v2.5"/>
<path d="M486.5 587.5v2.5"/>
<path d="M500.5 587.5v2.5"/>
<path d="M513.5 587.5v2.5"/>
<path d="M526.5 587.5v2.5"/>
<path d="M540.5 587.5v2.5"/>
<path d="M554.5 587.5v2.5"/>
<path d="M567.5 587.5v2.5"/>
<path d="M580.5 587.5v2.5"/>
<path d="M594.5 587.5v2.5"/>
<path d="M608.5 587.5v2.5"/>
<path d="M621.5 587.5v2.5"/>
<path d="M634.5 587.5v2.5"/>
<path d="M648.5 587.5v2.5"/>
<path d="M662.5 587.5v2.5"/>
<path d="M675.5 587.5v2.5"/>
<path d="M688.5 587.5v2.5"/>
<path d="M702.5 587.5v2.5"/>
<path d="M716.5 587.5v2.5"/>
<path d="M729.5 587.5v2.5"/>
<path d="M742.5 587.5v2.5"/>
<path d="M756.5 587.5v2.5"/>
<path d="M770.5 587.5v2.5"/>
<path d="M783.5 587.5v2.5"/>
<path d="M796.5 587.5v2.5"/>
<path d="M810.5 587.5v2.5"/>
<path d="M824.5 587.5v2.5"/>
<path d="M837.5 587.5v2.5"/>
<path d="M850.5 587.5v2.5"/>
<path d="M864.5 587.5v2.5"/>
<path d="M878.5 587.5v2.5"/>
<path d="M891.5 587.5v2.5"/>
<path d="M904.5 587.5v2.5"/>
<path d="M918.5 587.5v2.5"/>
<path d="M932.5 587.5v2.5"/>
<path d="M945.5 587.5v2.5"/>
</g>
<g fill="none" stroke="#cfcfcf" stroke-width="1">
 <path d="M134.5 563.5l2.5 2.5 2.5-2.5" stroke="#999"/>
 <path d="M153 560v11M147.5 565.5h11" stroke-width="1.4" stroke="#e8e8e8"/>
 <path d="M168.5 563.5l2.5 2.5 2.5-2.5" stroke="#999"/>
 <path d="M185.5 559v13" stroke="#2a2a2a"/>
 <path d="M196.5 561v9M203 561l-5 4.5 5 4.5z"/>
 <path d="M216 560v11l9-5.5z" fill="#e0e0e0" stroke="none"/>
 <path d="M236.5 561l5 4.5-5 4.5zM243.5 561v9"/>
 <path d="M258 562h5a3 3 0 0 1 0 6h-5a3 3 0 0 1 0-6zM261 568l1.5 1.5"/>
 <path d="M279.5 559v13" stroke="#2a2a2a"/>
 <path d="M290.5 560v11h10M292 569l7-8"/>
 <circle cx="315.5" cy="565.5" r="5"/><circle cx="315.5" cy="565.5" r="2.8" fill="#e0e0e0"/>
 <path d="M331.5 561v9M334.5 561v9M337.5 561v9M340.5 561v9M331.5 561h9M331.5 570h9"/>
 <circle cx="212" cy="582" r="3.2"/><path d="M214.5 584.5l2.5 2.5"/>
 <path d="M222 595.5v7M222 595.5l-5 2.5 5 2.5z" fill="#e0e0e0"/>
</g>
<g fill="#d8d8d8">
 <path d="M176.5 614.5q4.5-4.5 9 0q-4.5 4.5-9 0z"/><circle cx="181" cy="614.5" r="1.5" fill="#262626"/>
 <path d="M178 611.5q3-2.5 7 0" fill="none" stroke="#d8d8d8"/>
 <rect x="190" y="613.5" width="5.5" height="4.5"/><path d="M191 613.5v-2a1.75 1.75 0 0 1 3.5 0v2" fill="none" stroke="#d8d8d8"/>
 <path d="M207.5 610l-3.5 5h2.5l-1.5 4.5 4-5.5h-2.5z"/>
 <path d="M219.5 610.5l4 4-4 4-4-4z" fill="none" stroke="#d8d8d8"/><circle cx="219.5" cy="614.5" r="1.3"/>
</g>
<g fill="#d0d0d0">
 <path d="M35 611h6v1h-6zM35 617h6v1h-6zM36.5 612l1.5 2 1.5-2zM36.5 617l1.5-2 1.5 2z"/>
</g>
<path d="M319 581h9v6l-4.5 4-4.5-4z" fill="#f0a030"/>
</svg>
<div class="a" style="left:28px;top:621.80px;width:197.5px;height:15.82px;background:#6a6a6a;border-top:1px solid #2c2c2c"></div>
<div class="a" style="left:28px;top:621.80px;width:4.3px;height:16.32px;background:#d8c838"></div>
<div class="a" style="left:226.5px;top:621.80px;width:720.5px;height:15.82px;background:#333"></div>
<div class="a" style="left:232px;top:622.30px;width:715px;height:15.32px;background:#6a6a6a"></div>
<div class="t" style="left:47.5px;top:627.10px;color:#dedede">Scene_MAP</div>
<div class="a" style="left:28px;top:637.62px;width:197.5px;height:15.82px;background:#3b3b3b;border-top:1px solid #2c2c2c"></div>
<div class="a" style="left:28px;top:637.62px;width:4.3px;height:16.32px;background:#e0a21c"></div>
<div class="a" style="left:226.5px;top:637.62px;width:720.5px;height:15.82px;background:#3a3a3a;border-top:1px solid #2d2d2d"></div>
<div class="a" style="left:226.5px;top:637.62px;width:5.5px;height:15.82px;background:#333"></div>
<div class="t" style="left:47.5px;top:642.92px;color:#dedede">Top</div>
<div class="a" style="left:247.5px;top:638.12px;width:700px;height:14.82px;background:#e0a412"></div>
<div class="a" style="left:28px;top:653.44px;width:197.5px;height:15.82px;background:#3b3b3b;border-top:1px solid #2c2c2c"></div>
<div class="a" style="left:28px;top:653.44px;width:4.3px;height:16.32px;background:#d8c838"></div>
<div class="a" style="left:226.5px;top:653.44px;width:720.5px;height:15.82px;background:#3a3a3a;border-top:1px solid #2d2d2d"></div>
<div class="a" style="left:226.5px;top:653.44px;width:5.5px;height:15.82px;background:#333"></div>
<div class="t" style="left:47.5px;top:658.74px;color:#dedede">symbol_N</div>
<div class="a" style="left:28px;top:669.26px;width:197.5px;height:15.82px;background:#3b3b3b;border-top:1px solid #2c2c2c"></div>
<div class="a" style="left:28px;top:669.26px;width:4.3px;height:16.32px;background:#7030b0"></div>
<div class="a" style="left:226.5px;top:669.26px;width:720.5px;height:15.82px;background:#3a3a3a;border-top:1px solid #2d2d2d"></div>
<div class="a" style="left:226.5px;top:669.26px;width:5.5px;height:15.82px;background:#333"></div>
<div class="t" style="left:47.5px;top:674.56px;color:#dedede">symbol_R</div>
<div class="a" style="left:28px;top:685.08px;width:197.5px;height:15.82px;background:#3b3b3b;border-top:1px solid #2c2c2c"></div>
<div class="a" style="left:28px;top:685.08px;width:4.3px;height:16.32px;background:#20a0d8"></div>
<div class="a" style="left:226.5px;top:685.08px;width:720.5px;height:15.82px;background:#3a3a3a;border-top:1px solid #2d2d2d"></div>
<div class="a" style="left:226.5px;top:685.08px;width:5.5px;height:15.82px;background:#333"></div>
<div class="t" style="left:47.5px;top:690.38px;color:#dedede">symbol_F</div>
<div class="a" style="left:28px;top:700.90px;width:197.5px;height:15.82px;background:#3b3b3b;border-top:1px solid #2c2c2c"></div>
<div class="a" style="left:28px;top:700.90px;width:4.3px;height:16.32px;background:#1a8a80"></div>
<div class="a" style="left:226.5px;top:700.90px;width:720.5px;height:15.82px;background:#3a3a3a;border-top:1px solid #2d2d2d"></div>
<div class="a" style="left:226.5px;top:700.90px;width:5.5px;height:15.82px;background:#333"></div>
<div class="t" style="left:47.5px;top:706.20px;color:#dedede">symbol_V</div>
<div class="a" style="left:28px;top:716.72px;width:197.5px;height:15.82px;background:#3b3b3b;border-top:1px solid #2c2c2c"></div>
<div class="a" style="left:28px;top:716.72px;width:4.3px;height:16.32px;background:#70a848"></div>
<div class="a" style="left:226.5px;top:716.72px;width:720.5px;height:15.82px;background:#3a3a3a;border-top:1px solid #2d2d2d"></div>
<div class="a" style="left:226.5px;top:716.72px;width:5.5px;height:15.82px;background:#333"></div>
<div class="t" style="left:47.5px;top:722.02px;color:#dedede">symbol_M</div>
<div class="a" style="left:28px;top:732.54px;width:197.5px;height:15.82px;background:#3b3b3b;border-top:1px solid #2c2c2c"></div>
<div class="a" style="left:28px;top:732.54px;width:4.3px;height:16.32px;background:#d8c838"></div>
<div class="a" style="left:226.5px;top:732.54px;width:720.5px;height:15.82px;background:#3a3a3a;border-top:1px solid #2d2d2d"></div>
<div class="a" style="left:226.5px;top:732.54px;width:5.5px;height:15.82px;background:#333"></div>
<div class="t" style="left:47.5px;top:737.84px;color:#dedede">Naples</div>
<div class="a" style="left:28px;top:748.36px;width:197.5px;height:15.82px;background:#333333;border-top:1px solid #2c2c2c"></div>
<div class="a" style="left:28px;top:748.36px;width:4.3px;height:16.32px;background:#d8c838"></div>
<div class="a" style="left:226.5px;top:748.36px;width:720.5px;height:15.82px;background:#343434;border-top:1px solid #2d2d2d"></div>
<div class="a" style="left:226.5px;top:748.36px;width:5.5px;height:15.82px;background:#333"></div>
<div class="t" style="left:55px;top:753.66px;color:#dedede">Wyświetlanie</div>
<div class="t" style="left:161.5px;top:753.66px;color:#dedede">Wyłączone</div>
<div class="a" style="left:28px;top:764.18px;width:197.5px;height:15.82px;background:#333333;border-top:1px solid #2c2c2c"></div>
<div class="a" style="left:28px;top:764.18px;width:4.3px;height:16.32px;background:#d8c838"></div>
<div class="a" style="left:226.5px;top:764.18px;width:720.5px;height:15.82px;background:#343434;border-top:1px solid #2d2d2d"></div>
<div class="a" style="left:226.5px;top:764.18px;width:5.5px;height:15.82px;background:#333"></div>
<div class="t" style="left:55px;top:769.48px;color:#dedede">Od góry</div>
<div class="t" style="left:161.5px;top:769.48px;color:#dedede">379</div>
<div class="a" style="left:28px;top:780.00px;width:197.5px;height:15.82px;background:#3b3b3b;border-top:1px solid #2c2c2c"></div>
<div class="a" style="left:28px;top:780.00px;width:4.3px;height:16.32px;background:#9a30a8"></div>
<div class="a" style="left:226.5px;top:780.00px;width:720.5px;height:15.82px;background:#3a3a3a;border-top:1px solid #2d2d2d"></div>
<div class="a" style="left:226.5px;top:780.00px;width:5.5px;height:15.82px;background:#333"></div>
<div class="t" style="left:47.5px;top:785.30px;color:#dedede">Rome</div>
<div class="a" style="left:28px;top:795.82px;width:197.5px;height:15.82px;background:#333333;border-top:1px solid #2c2c2c"></div>
<div class="a" style="left:28px;top:795.82px;width:4.3px;height:16.32px;background:#9a30a8"></div>
<div class="a" style="left:226.5px;top:795.82px;width:720.5px;height:15.82px;background:#343434;border-top:1px solid #2d2d2d"></div>
<div class="a" style="left:226.5px;top:795.82px;width:5.5px;height:15.82px;background:#333"></div>
<div class="t" style="left:55px;top:801.12px;color:#dedede">Wyświetlanie</div>
<div class="t" style="left:161.5px;top:801.12px;color:#dedede">Wyłączone</div>
<div class="a" style="left:28px;top:811.64px;width:197.5px;height:15.82px;background:#333333;border-top:1px solid #2c2c2c"></div>
<div class="a" style="left:28px;top:811.64px;width:4.3px;height:16.32px;background:#9a30a8"></div>
<div class="a" style="left:226.5px;top:811.64px;width:720.5px;height:15.82px;background:#343434;border-top:1px solid #2d2d2d"></div>
<div class="a" style="left:226.5px;top:811.64px;width:5.5px;height:15.82px;background:#333"></div>
<div class="t" style="left:55px;top:816.94px;color:#dedede">Od góry</div>
<div class="t" style="left:161.5px;top:816.94px;color:#dedede">241</div>
<div class="a" style="left:554px;top:765.18px;width:49px;height:14.82px;background:#8c7e1c"></div>
<div class="a" style="left:504.5px;top:781.00px;width:53px;height:14.82px;background:#8a2898"></div>
<div class="a" style="left:504px;top:796.82px;width:8px;height:14.82px;background:#4a1458"></div>
<div class="a" style="left:510px;top:812.64px;width:48px;height:8px;background:#6a1e7a"></div>

<svg style="left:0;top:0" width="960" height="830">
<path d="M38 628.51h5l-2.5 3z" fill="#ddd"/>
<path d="M207.5 625.51l-3.5 5h2.5l-1.5 4.5 4-5.5h-2.5z" fill="#d8d8d8"/>
<path d="M176.5 645.83q4.5-4.5 9 0q-4.5 4.5-9 0z" fill="#ddd"/><circle cx="181" cy="645.83" r="1.5" fill="#3b3b3b"/>
<rect x="190" y="644.83" width="5.5" height="4.5" fill="#ddd"/><path d="M194 644.83v-2a1.5 1.5 0 0 1 3 0v1" fill="none" stroke="#ddd" stroke-width="1"/>
<path d="M207.5 641.33l-3.5 5h2.5l-1.5 4.5 4-5.5h-2.5z" fill="#e8e8e8"/>
<path d="M217 645.33l2.5-2.5 2.5 2.5M217 648.33l2.5-2.5 2.5 2.5" fill="none" stroke="#aaa" stroke-width="1"/>
<path d="M247.5 642.33l3.5 3.5-3.5 3.5-3.5-3.5z" fill="#f0f0f0"/>
<path d="M176.5 661.65q4.5-4.5 9 0q-4.5 4.5-9 0z" fill="#ddd"/><circle cx="181" cy="661.65" r="1.5" fill="#3b3b3b"/>
<rect x="190" y="660.65" width="5.5" height="4.5" fill="#ddd"/><path d="M194 660.65v-2a1.5 1.5 0 0 1 3 0v1" fill="none" stroke="#ddd" stroke-width="1"/>
<path d="M207.5 657.15l-3.5 5h2.5l-1.5 4.5 4-5.5h-2.5z" fill="#f0a030"/>
<path d="M217 661.15l2.5-2.5 2.5 2.5M217 664.15l2.5-2.5 2.5 2.5" fill="none" stroke="#aaa" stroke-width="1"/>
<path d="M231 658.65l3 3-3 3-3-3z" fill="#eee"/>
<path d="M176.5 677.47q4.5-4.5 9 0q-4.5 4.5-9 0z" fill="#ddd"/><circle cx="181" cy="677.47" r="1.5" fill="#3b3b3b"/>
<rect x="190" y="676.47" width="5.5" height="4.5" fill="#ddd"/><path d="M194 676.47v-2a1.5 1.5 0 0 1 3 0v1" fill="none" stroke="#ddd" stroke-width="1"/>
<path d="M207.5 672.97l-3.5 5h2.5l-1.5 4.5 4-5.5h-2.5z" fill="#f0a030"/>
<path d="M217 676.97l2.5-2.5 2.5 2.5M217 679.97l2.5-2.5 2.5 2.5" fill="none" stroke="#aaa" stroke-width="1"/>
<path d="M231 674.47l3 3-3 3-3-3z" fill="#eee"/>
<path d="M176.5 693.29q4.5-4.5 9 0q-4.5 4.5-9 0z" fill="#ddd"/><circle cx="181" cy="693.29" r="1.5" fill="#3b3b3b"/>
<rect x="190" y="692.29" width="5.5" height="4.5" fill="#ddd"/><path d="M194 692.29v-2a1.5 1.5 0 0 1 3 0v1" fill="none" stroke="#ddd" stroke-width="1"/>
<path d="M207.5 688.79l-3.5 5h2.5l-1.5 4.5 4-5.5h-2.5z" fill="#f0a030"/>
<path d="M217 692.79l2.5-2.5 2.5 2.5M217 695.79l2.5-2.5 2.5 2.5" fill="none" stroke="#aaa" stroke-width="1"/>
<path d="M231 690.29l3 3-3 3-3-3z" fill="#eee"/>
<path d="M176.5 709.11q4.5-4.5 9 0q-4.5 4.5-9 0z" fill="#ddd"/><circle cx="181" cy="709.11" r="1.5" fill="#3b3b3b"/>
<rect x="190" y="708.11" width="5.5" height="4.5" fill="#ddd"/><path d="M194 708.11v-2a1.5 1.5 0 0 1 3 0v1" fill="none" stroke="#ddd" stroke-width="1"/>
<path d="M207.5 704.61l-3.5 5h2.5l-1.5 4.5 4-5.5h-2.5z" fill="#f0a030"/>
<path d="M217 708.61l2.5-2.5 2.5 2.5M217 711.61l2.5-2.5 2.5 2.5" fill="none" stroke="#aaa" stroke-width="1"/>
<path d="M231 706.11l3 3-3 3-3-3z" fill="#eee"/>
<path d="M176.5 724.93q4.5-4.5 9 0q-4.5 4.5-9 0z" fill="#ddd"/><circle cx="181" cy="724.93" r="1.5" fill="#3b3b3b"/>
<rect x="190" y="723.93" width="5.5" height="4.5" fill="#ddd"/><path d="M194 723.93v-2a1.5 1.5 0 0 1 3 0v1" fill="none" stroke="#ddd" stroke-width="1"/>
<path d="M207.5 720.43l-3.5 5h2.5l-1.5 4.5 4-5.5h-2.5z" fill="#f0a030"/>
<path d="M217 724.43l2.5-2.5 2.5 2.5M217 727.43l2.5-2.5 2.5 2.5" fill="none" stroke="#aaa" stroke-width="1"/>
<path d="M231 721.93l3 3-3 3-3-3z" fill="#eee"/>
<path d="M176.5 740.75q4.5-4.5 9 0q-4.5 4.5-9 0z" fill="#ddd"/><circle cx="181" cy="740.75" r="1.5" fill="#3b3b3b"/>
<rect x="190" y="739.75" width="5.5" height="4.5" fill="#ddd"/><path d="M194 739.75v-2a1.5 1.5 0 0 1 3 0v1" fill="none" stroke="#ddd" stroke-width="1"/>
<path d="M207.5 736.25l-3.5 5h2.5l-1.5 4.5 4-5.5h-2.5z" fill="#f0a030"/>
<path d="M217 738.25l2.5 2.5 2.5-2.5M217 741.25l2.5 2.5 2.5-2.5" fill="none" stroke="#aaa" stroke-width="1"/>
<path d="M220 753.57l3 3-3 3-3-3z" fill="#eee"/>
<path d="M220 769.39l3 3-3 3-3-3z" fill="#eee"/>
<path d="M176.5 788.21q4.5-4.5 9 0q-4.5 4.5-9 0z" fill="#ddd"/><circle cx="181" cy="788.21" r="1.5" fill="#3b3b3b"/>
<rect x="190" y="787.21" width="5.5" height="4.5" fill="#ddd"/><path d="M194 787.21v-2a1.5 1.5 0 0 1 3 0v1" fill="none" stroke="#ddd" stroke-width="1"/>
<path d="M207.5 783.71l-3.5 5h2.5l-1.5 4.5 4-5.5h-2.5z" fill="#f0a030"/>
<path d="M217 785.71l2.5 2.5 2.5-2.5M217 788.71l2.5 2.5 2.5-2.5" fill="none" stroke="#aaa" stroke-width="1"/>
<path d="M220 801.03l3 3-3 3-3-3z" fill="#eee"/>
<path d="M220 816.85l3 3-3 3-3-3z" fill="#eee"/>
</svg>
<svg style="left:0;top:0" width="960" height="830">
<path d="M554 769.59l3 3-3 3-3-3z" fill="#eee"/>
<path d="M603 769.59l3 3-3 3-3-3z" fill="#eee"/>
<path d="M504.5 785.41l3 3-3 3-3-3z" fill="#eee"/>
<path d="M510.5 785.41l3 3-3 3-3-3z" fill="#eee"/>
<path d="M558 785.41l3 3-3 3-3-3z" fill="#eee"/>
<path d="M504.5 801.23l3 3-3 3-3-3z" fill="#eee"/>
<path d="M510.5 801.23l3 3-3 3-3-3z" fill="#eee"/>
<path d="M510.5 817.05l3 3-3 3-3-3z" fill="#eee"/>
<path d="M558 817.05l3 3-3 3-3-3z" fill="#eee"/>
</svg>
<div class="a" style="left:323px;top:591px;width:1px;height:236px;background:#c0301c"></div>
<div class="a" style="left:226.5px;top:819px;width:720.5px;height:8.5px;background:#2e2e2e"></div>
<div class="a" style="left:238px;top:819.5px;width:661px;height:7.5px;background:#666666"></div>
<div class="a" style="left:947px;top:575px;width:8px;height:244px;background:#2e2e2e"></div>
<svg style="left:0;top:0" width="960" height="830"><g fill="none" stroke="#aaa">
<path d="M233.5 821l-2 2 2 2M940 821l2 2-2 2M948.5 812.5l2.5 2.5 2.5-2.5"/></g></svg>

<!-- dialog -->
<div class="a" style="left:344px;top:251px;width:818px;height:511.5px;background:#373737;border-radius:7px;box-shadow:0 1px 4px rgba(0,0,0,.35),0 0 0 1px rgba(80,80,80,.7)"></div>
<div class="a" style="left:344px;top:251px;width:818px;height:20px;background:#f3f3f3;border-radius:7px 7px 0 0"></div>
<svg style="left:0;top:0" width="400" height="280"><rect x="349" y="255" width="11" height="11" fill="#cfe020"/><path d="M350.8 258.3l1.5 4.2 1.6-3.6 1.6 3.6 2.6-4.8" fill="none" stroke="#333a08" stroke-width="1.2" stroke-linejoin="round"/></svg>
<div class="t" style="left:363.5px;top:256.5px;color:#777;font-size:8px;letter-spacing:-.3px">Funkcja JavaScript</div>
<svg style="left:0;top:0" width="1200" height="300">
 <g fill="none" stroke-width="1">
  <path d="M1083 261.5h8" stroke="#d8d8d8"/>
  <rect x="1113.5" y="258.5" width="6.5" height="6.5" stroke="#7a7a7a" stroke-width=".9"/>
  <path d="M1143 258l6.8 6.8M1149.8 258l-6.8 6.8" stroke="#7a7a7a" stroke-width=".9"/>
 </g>
</svg>
<div class="a" style="left:344px;top:271px;width:818px;height:7px;background:#333"></div>
<div class="a" style="left:352px;top:278.5px;width:802px;height:20.5px;background:#383838;border-top:1px solid #474747;border-bottom:1px solid #2a2a2a"></div>
<div class="a" style="left:352px;top:299px;width:802px;height:5px;background:#333"></div>
<div class="a" style="left:590.5px;top:281.5px;width:36px;height:14.5px;background:#262626"></div>
<svg style="left:0;top:0" width="1200" height="300">
 <g stroke="#262626"><path d="M400.5 282v13M495.5 282v13M529.5 282v13M582.5 282v13M633.5 282v13"/></g>
 <g fill="none" stroke="#555" stroke-width="1">
  <path d="M358 285a4.8 4.8 0 1 1 0.5 7.8"/><circle cx="357.5" cy="285" r="1" fill="#555"/>
  <path d="M386 285a4.8 4.8 0 1 0-0.5 7.8"/><circle cx="386.5" cy="285" r="1" fill="#555"/>
  <rect x="453.5" y="285.5" width="5" height="7"/><rect x="456.5" y="287.5" width="4" height="5"/>
 </g>
 <g fill="none" stroke="#d0d0d0" stroke-width="1">
  <path d="M412.5 285.5v8h6"/><rect x="414.5" y="283.5" width="6" height="8"/><path d="M416 288.5h3M416 290h3"/>
  <path d="M433.5 283.5l5 6M439.5 283.5l-5 6"/><circle cx="434" cy="291.5" r="1.5"/><circle cx="439" cy="291.5" r="1.5"/>
  <rect x="506.5" y="285.5" width="6" height="6"/><path d="M509.5 288.5l4.5-4.5M511.5 284h2.5v2.5"/>
  <circle cx="543.5" cy="286.5" r="3"/><path d="M545.5 288.5l3 3"/>
  <path d="M618.5 287l2.5 2.5 2.5-2.5" stroke="#aaa"/>
  <path d="M645 283.5l1.2-.6 6.3 6.3" stroke-width="1.1"/><path d="M651.2 290.2l3.3 3.3" stroke-width="2.4" stroke="#e0e0e0"/><path d="M645.8 293l5.2-5.2" stroke-width="1.9" stroke="#e0e0e0"/><path d="M650.6 287.6a2.6 2.6 0 1 1 3.6-3.2" stroke-width="1.6" stroke="#e0e0e0"/>
 </g>
 <path d="M473 284l8 8M481 284l-8 8" stroke="#d84040" stroke-width="1"/>
 <circle cx="564" cy="286" r="2.2" fill="#d04a3a"/>
 <rect x="561.5" y="288" width="2" height="4" fill="#ddd"/>
 <rect x="564.5" y="290" width="4" height="3" fill="#2a8a8a"/>
</svg>
<div class="t" style="left:593px;top:285px;color:#ddd">100%</div>
<!-- editor -->
<div class="a" style="left:352px;top:304px;width:802px;height:428px;background:#ffffff"></div>
<div class="a" style="left:352px;top:304px;width:16px;height:428px;background:#e4e4e6"></div>
<div class="a" style="left:385px;top:306.8px;width:767px;height:13.4px;background:#dbe9d3"></div>
<div class="a" style="left:425px;top:306.3px;width:98.6px;height:13.9px;background:#12a6e6"></div>
<svg style="left:0;top:0" width="400" height="330"><path d="M371.5 312h7l-3.5 5.5z" fill="#111"/></svg>
<div class="t" style="left:359.5px;top:309.5px;font-size:10.3px;color:#333">1</div>
<div class="t" style="left:359.5px;top:323.5px;font-size:10.3px;color:#333">2</div>
<div class="t" style="left:359.5px;top:337.5px;font-size:10.3px;color:#333">3</div>
<div class="t" style="left:385.5px;top:309.5px;font-size:10.3px;color:#222"><span style="color:#3030c8">function</span> <span style="color:#101040">elementEventHandler</span>(doc, e) {</div>
<div class="t" style="left:385.5px;top:337.5px;font-size:10.3px;color:#222">}</div>
<!-- buttons -->
<div class="a" style="left:1036.5px;top:736px;width:55.5px;height:15.5px;background:#2e2e2e;border:1px solid #3c3c3c"></div>
<div class="a" style="left:1095.5px;top:736px;width:55px;height:15.5px;background:#2e2e2e;border:1px solid #3c3c3c"></div>
<div class="t" style="left:1058.5px;top:740px;color:#e0e0e0">OK</div>
<div class="t" style="left:1111.5px;top:740px;color:#e0e0e0">Anuluj</div>

</body></html>
